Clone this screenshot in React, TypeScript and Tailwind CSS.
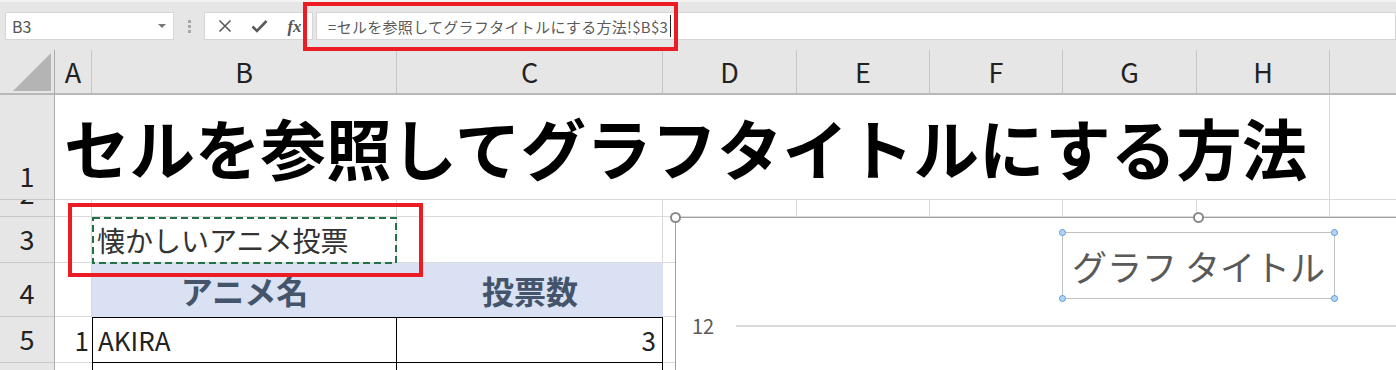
import React from "react";

const GL = "border-[#dadada]";

function RowLabel({ n }: { n: string }) {
  return (
    <div className="bg-[#e6e6e6] border-r border-r-[#ababab] border-b border-b-[#c8c8c8] flex items-end justify-center overflow-hidden">
      <span className="text-[27px] leading-none text-[#222] mb-[10px]">{n}</span>
    </div>
  );
}

function ColHead({ c, last = false }: { c: string; last?: boolean }) {
  return (
    <div className={`bg-[#e6e6e6] border-b-2 border-b-[#b8b8b8] ${last ? "" : "border-r border-r-[#c6c6c6]"} flex items-center justify-center`}>
      <span className="text-[27px] leading-none text-[#222]">{c}</span>
    </div>
  );
}

function Cell({ className = "", children }: { className?: string; children?: React.ReactNode }) {
  return <div className={`border-r border-b ${GL} ${className}`}>{children}</div>;
}

export default function App() {
  const cols = ["A", "B", "C", "D", "E", "F", "G", "H"];
  return (
    <div className="relative w-[1396px] h-[370px] overflow-hidden bg-white font-['Noto_Sans_CJK_JP','Noto_Sans',sans-serif]">
      {/* Formula bar */}
      <div className="h-[50px] bg-[#e6e6e6] border-t-2 border-t-[#f2f2f2] flex items-start pt-[10px] pl-[5px]">
        <div className="w-[169px] h-[28px] bg-white border border-[#d6d6d6] flex items-center justify-between pl-[6px] pr-[7px]">
          <span className="text-[16px] text-[#555] leading-none">B3</span>
          <span className="w-0 h-0 border-l-[4px] border-r-[4px] border-t-[4px] border-l-transparent border-r-transparent border-t-[#777]" />
        </div>
        <div className="w-[30px] h-[28px] flex flex-col items-center justify-center gap-[2px]">
          <span className="w-[3px] h-[3px] bg-[#a8a8a8]" />
          <span className="w-[3px] h-[3px] bg-[#a8a8a8]" />
          <span className="w-[3px] h-[3px] bg-[#a8a8a8]" />
        </div>
        <div className="w-[109px] h-[28px] bg-white border border-[#d6d6d6] flex items-center pl-[2px]">
          <div className="w-[35px] flex justify-center">
            <svg width="14" height="14" viewBox="0 0 14 14">
              <path d="M1.5 1.5 L12.5 12.5 M12.5 1.5 L1.5 12.5" stroke="#5a5a5a" strokeWidth="1.6" fill="none" />
            </svg>
          </div>
          <div className="w-[35px] flex justify-center">
            <svg width="17" height="14" viewBox="0 0 17 14">
              <path d="M1.5 7.5 L6 12 L15.5 2" stroke="#5a5a5a" strokeWidth="2.6" fill="none" />
            </svg>
          </div>
          <div className="w-[35px] flex justify-center">
            <span className="font-['Liberation_Serif',serif] italic font-bold text-[17px] leading-none text-[#555]">fx</span>
          </div>
        </div>
        <div className="ml-[3px] flex-1 h-[28px] bg-white border border-[#d6d6d6] flex items-center pl-[11px]">
          <span className="text-[15px] leading-none text-[#5a5a5a] tracking-[0.3px]">=セルを参照してグラフタイトルにする方法!$B$3</span>
          <span className="ml-[2px] w-[1px] h-[22px] bg-[#222]" />
        </div>
      </div>

      {/* Sheet */}
      <div className="relative">
        <div className="grid grid-cols-[55px_37px_305px_266px_134px_133px_133px_134px_133px_1fr] grid-rows-[45px_105px_17px_46px_54px_46px_60px]">
          {/* Header row */}
          <div className="bg-[#e6e6e6] border-r border-r-[#ababab] border-b-2 border-b-[#b8b8b8] flex items-end justify-end pr-[2px] pb-[1px]">
            <svg width="40" height="40" viewBox="0 0 40 40">
              <polygon points="1,39 39,39 39,1" fill="#b4b4b4" />
            </svg>
          </div>
          {cols.map((c) => (
            <ColHead key={c} c={c} />
          ))}
          <ColHead c="" last />

          {/* Row 1 */}
          <RowLabel n="1" />
          <div className={`col-span-8 border-r border-b ${GL} flex items-center pl-[9px] overflow-visible`}>
            <span className="whitespace-nowrap text-[65.5px] font-bold leading-none text-black">セルを参照してグラフタイトルにする方法</span>
          </div>
          <div className={`border-b ${GL}`} />

          {/* Row 2 */}
          <RowLabel n="2" />
          {cols.map((c) => (
            <Cell key={"r2" + c} />
          ))}
          <div className={`border-b ${GL}`} />

          {/* Row 3 */}
          <RowLabel n="3" />
          <Cell />
          <Cell className="flex items-center pl-[5px]">
            <span className="whitespace-nowrap text-[28px] leading-none text-[#333]">懐かしいアニメ投票</span>
          </Cell>
          <Cell />
          <Cell />
          <Cell />
          <Cell />
          <Cell />
          <Cell />
          <div className={`border-b ${GL}`} />

          {/* Row 4 */}
          <RowLabel n="4" />
          <Cell />
          <div className="bg-[#d9e1f2] flex items-center justify-center">
            <span className="text-[32px] font-bold leading-none text-[#44546a]">アニメ名</span>
          </div>
          <div className="bg-[#d9e1f2] flex items-center justify-center">
            <span className="text-[32px] font-bold leading-none text-[#44546a]">投票数</span>
          </div>
          <Cell />
          <Cell />
          <Cell />
          <Cell />
          <Cell />
          <div className={`border-b ${GL}`} />

          {/* Row 5 */}
          <RowLabel n="5" />
          <div className={`border-b ${GL} flex items-center justify-end pr-[3px]`}>
            <span className="text-[26px] leading-none text-[#222]">1</span>
          </div>
          <div className="border border-black flex items-center pl-[5px]">
            <span className="text-[26px] leading-none text-[#222]">AKIRA</span>
          </div>
          <div className="border-t border-b border-r border-black flex items-center justify-end pr-[6px]">
            <span className="text-[26px] leading-none text-[#222]">3</span>
          </div>
          <Cell />
          <Cell />
          <Cell />
          <Cell />
          <Cell />
          <div className={`border-b ${GL}`} />

          {/* Row 6 */}
          <RowLabel n="6" />
          <div className={`border-b ${GL}`} />
          <div className="border-l border-r border-black" />
          <div className="border-r border-black" />
          <Cell />
          <Cell />
          <Cell />
          <Cell />
          <Cell />
          <div className={`border-b ${GL}`} />
        </div>

        {/* Copy marquee on B3 */}
        <div className="absolute left-[92px] top-[167px] w-[305px] h-[47px]">
          <svg width="305" height="47" viewBox="0 0 305 47">
            <rect x="1" y="1" width="303" height="45" fill="none" stroke="#217346" strokeWidth="2" strokeDasharray="7 4" />
          </svg>
        </div>

        {/* Red annotation around B3 */}
        <div className="absolute left-[68px] top-[153px] w-[355px] h-[74px] border-4 border-[#ec1c24]" />

        {/* Chart */}
        <div className="absolute left-[675px] top-[167px] w-[760px] h-[220px] bg-white border border-[#a0a0a0]">
          <div className="absolute left-[386px] top-[14px] w-[273px] h-[67px] border border-[#c0c0c0] flex items-center justify-center">
            <span className="whitespace-nowrap text-[35px] leading-none text-[#595959]">グラフ タイトル</span>
            <span className="absolute -left-[4px] -top-[4px] w-[7px] h-[7px] rounded-full bg-[#b4d4f3] border border-[#5b9bd5]" />
            <span className="absolute -right-[4px] -top-[4px] w-[7px] h-[7px] rounded-full bg-[#b4d4f3] border border-[#5b9bd5]" />
            <span className="absolute -left-[4px] -bottom-[4px] w-[7px] h-[7px] rounded-full bg-[#b4d4f3] border border-[#5b9bd5]" />
            <span className="absolute -right-[4px] -bottom-[4px] w-[7px] h-[7px] rounded-full bg-[#b4d4f3] border border-[#5b9bd5]" />
          </div>
          <div className="absolute left-[16px] top-[98px] flex items-center">
            <span className="text-[20px] leading-none text-[#595959] w-[44px]">12</span>
            <span className="w-[700px] h-[2px] bg-[#d9d9d9]" />
          </div>
        </div>
        <span className="absolute left-[670px] top-[162px] w-[11px] h-[11px] rounded-full bg-white border-2 border-[#8a8a8a]" />
        <span className="absolute left-[1193px] top-[162px] w-[11px] h-[11px] rounded-full bg-white border-2 border-[#8a8a8a]" />
      </div>

      {/* Red annotation around formula */}
      <div className="absolute left-[303px] top-[2px] w-[375px] h-[49px] border-4 border-[#ec1c24]" />
    </div>
  );
}
